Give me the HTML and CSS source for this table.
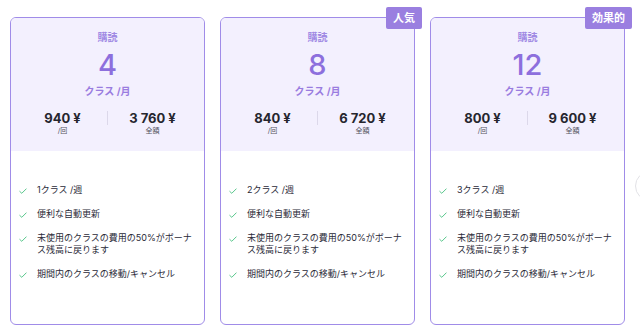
FILE: index.html
```html
<!DOCTYPE html>
<html lang="ja">
<head>
<meta charset="utf-8">
<link rel="stylesheet" href="styles.css">
</head>
<body>
<div class="plans">
  <div class="card">
    <div class="head">
      <div class="kind">購読</div>
      <div class="count">4</div>
      <div class="unit">クラス /月</div>
      <div class="prices">
        <div class="price"><div class="amount">940 ¥</div><div class="label">/回</div></div>
        <div class="divider"></div>
        <div class="price"><div class="amount">3 760 ¥</div><div class="label">全額</div></div>
      </div>
    </div>
    <ul class="features">
      <li><svg class="check" viewBox="0 0 8 6"><path d="M0.5 3.2 L2.8 5.3 L7.5 0.6"/></svg><span>1クラス /週</span></li>
      <li><svg class="check" viewBox="0 0 8 6"><path d="M0.5 3.2 L2.8 5.3 L7.5 0.6"/></svg><span>便利な自動更新</span></li>
      <li><svg class="check" viewBox="0 0 8 6"><path d="M0.5 3.2 L2.8 5.3 L7.5 0.6"/></svg><span>未使用のクラスの費用の50%がボーナス残高に戻ります</span></li>
      <li><svg class="check" viewBox="0 0 8 6"><path d="M0.5 3.2 L2.8 5.3 L7.5 0.6"/></svg><span>期間内のクラスの移動/キャンセル</span></li>
    </ul>
  </div>
  <div class="card">
    <div class="badge">人気</div>
    <div class="head">
      <div class="kind">購読</div>
      <div class="count">8</div>
      <div class="unit">クラス /月</div>
      <div class="prices">
        <div class="price"><div class="amount">840 ¥</div><div class="label">/回</div></div>
        <div class="divider"></div>
        <div class="price"><div class="amount">6 720 ¥</div><div class="label">全額</div></div>
      </div>
    </div>
    <ul class="features">
      <li><svg class="check" viewBox="0 0 8 6"><path d="M0.5 3.2 L2.8 5.3 L7.5 0.6"/></svg><span>2クラス /週</span></li>
      <li><svg class="check" viewBox="0 0 8 6"><path d="M0.5 3.2 L2.8 5.3 L7.5 0.6"/></svg><span>便利な自動更新</span></li>
      <li><svg class="check" viewBox="0 0 8 6"><path d="M0.5 3.2 L2.8 5.3 L7.5 0.6"/></svg><span>未使用のクラスの費用の50%がボーナス残高に戻ります</span></li>
      <li><svg class="check" viewBox="0 0 8 6"><path d="M0.5 3.2 L2.8 5.3 L7.5 0.6"/></svg><span>期間内のクラスの移動/キャンセル</span></li>
    </ul>
  </div>
  <div class="card">
    <div class="badge">効果的</div>
    <div class="head">
      <div class="kind">購読</div>
      <div class="count">12</div>
      <div class="unit">クラス /月</div>
      <div class="prices">
        <div class="price"><div class="amount">800 ¥</div><div class="label">/回</div></div>
        <div class="divider"></div>
        <div class="price"><div class="amount">9 600 ¥</div><div class="label">全額</div></div>
      </div>
    </div>
    <ul class="features">
      <li><svg class="check" viewBox="0 0 8 6"><path d="M0.5 3.2 L2.8 5.3 L7.5 0.6"/></svg><span>3クラス /週</span></li>
      <li><svg class="check" viewBox="0 0 8 6"><path d="M0.5 3.2 L2.8 5.3 L7.5 0.6"/></svg><span>便利な自動更新</span></li>
      <li><svg class="check" viewBox="0 0 8 6"><path d="M0.5 3.2 L2.8 5.3 L7.5 0.6"/></svg><span>未使用のクラスの費用の50%がボーナス残高に戻ります</span></li>
      <li><svg class="check" viewBox="0 0 8 6"><path d="M0.5 3.2 L2.8 5.3 L7.5 0.6"/></svg><span>期間内のクラスの移動/キャンセル</span></li>
    </ul>
  </div>
  <div class="next"></div>
</div>
</body>
</html>
```
FILE: styles.css
```css
html, body {
  margin: 0;
  padding: 0;
  background: #ffffff;
  overflow: hidden;
}
body {
  font-family: Inter, "Noto Sans CJK JP", sans-serif;
  color: #2b2b38;
}
.plans {
  position: relative;
  display: flex;
  gap: 15px;
  padding: 17px 0 0 10px;
  width: 640px;
  height: 334px;
  box-sizing: border-box;
}
.card {
  position: relative;
  flex: 0 0 195px;
  height: 308px;
  box-sizing: border-box;
  border: 1.5px solid #a08ce8;
  border-radius: 6px;
  background: #ffffff;
  display: flex;
  flex-direction: column;
}
.badge {
  position: absolute;
  top: -11px;
  right: -8px;
  height: 22px;
  line-height: 22px;
  padding: 0 7px;
  background: #9a7fe0;
  color: #ffffff;
  font-size: 11px;
  font-weight: 700;
  border-radius: 2px;
}
.head {
  background: #f3f0fe;
  border-radius: 5px 5px 0 0;
  padding: 12px 12px 14px;
  text-align: center;
  height: 133px;
  box-sizing: border-box;
}
.kind {
  font-size: 10px;
  line-height: 14px;
  color: #a08ae4;
  font-weight: 700;
}
.count {
  margin-top: 5px;
  font-size: 29px;
  line-height: 32px;
  color: #8d6fdd;
  font-weight: 500;
}
.unit {
  margin-top: 3px;
  font-size: 10px;
  line-height: 14px;
  color: #9a7ce0;
  font-weight: 700;
}
.prices {
  margin: 12px -5px 0;
  display: flex;
  align-items: center;
}
.price {
  flex: 1;
  text-align: center;
}
.amount {
  font-size: 13px;
  line-height: 16px;
  font-weight: 700;
  color: #26262e;
}
.label {
  font-size: 7px;
  line-height: 10px;
  color: #55555f;
}
.divider {
  width: 1px;
  height: 14px;
  background: #dcd8ea;
  margin-top: -10px;
}
.features {
  list-style: none;
  margin: 0;
  padding: 33px 8px 0 8px;
  display: flex;
  flex-direction: column;
  gap: 12px;
}
.features li {
  display: flex;
  align-items: flex-start;
  gap: 10px;
  font-size: 9px;
  line-height: 12px;
  color: #2a2a38;
  font-weight: 400;
}
.check {
  flex: 0 0 8px;
  width: 8px;
  height: 6px;
  margin-top: 4px;
  fill: none;
  stroke: #58c68a;
  stroke-width: 1;
}
.next {
  position: absolute;
  left: 635px;
  top: 171px;
  width: 28px;
  height: 28px;
  border-radius: 50%;
  border: 1px solid #e2e2e6;
  background: #ffffff;
}
```
